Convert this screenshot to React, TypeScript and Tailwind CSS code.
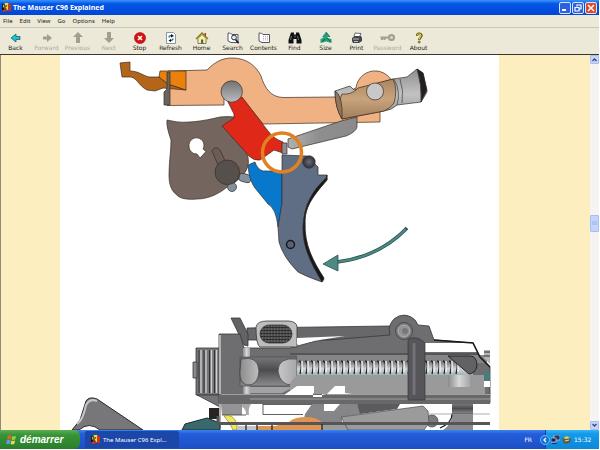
import React from "react";

const menus = ["File", "Edit", "View", "Go", "Options", "Help"];

function Flag() {
  return (
    <svg className="size-[9px] shrink-0" viewBox="0 0 10 10" aria-hidden="true">
      <path d="M0 1h3v8H0z" fill="#171410" />
      <path d="M3 0h4v8H3z" fill="#f6dc2c" />
      <path d="M7 1h3v8H7z" fill="#d92b1c" />
      <path d="M4 2l2 1-2 2 2 3H3z" fill="#5b3a14" />
      <path d="M0 8l5-1 1 2-5 1z" fill="#c83a20" />
      <path d="M1 2h1v3H1z" fill="#d8d8c8" />
    </svg>
  );
}

const arrow = "M1 6l5-4v2.500h4v3H6V10z";

const tools: { label: string; off?: boolean; icon: React.ReactNode }[] = [
  { label: "Back", icon: <path d={arrow} fill="#19c3cf" stroke="#15535c" strokeWidth=".7" /> },
  { label: "Forward", off: true, icon: <path d={arrow} transform="rotate(180 6 6)" fill="#a19f92" /> },
  { label: "Previous", off: true, icon: <path d="M6 0l5 5H8v6H4V5H1z" fill="#a19f92" /> },
  { label: "Next", off: true, icon: <path d="M6 11l5-5H8V0H4v6H1z" fill="#a19f92" /> },
  {
    label: "Stop",
    icon: (
      <>
        <circle cx="6" cy="6" r="5.600" fill="#d90d12" stroke="#8b0d0d" strokeWidth=".5" />
        <path d="M4 4l4 4M8 4L4 8" stroke="#fff" strokeWidth="1.600" />
      </>
    ),
  },
  {
    label: "Refresh",
    icon: (
      <>
        <path d="M1.500.5h7l2 2v9h-9z" fill="#fff" stroke="#6f7f95" strokeWidth=".8" />
        <path d="M4 5.500c0-2 2-2 3-1.500M8 6.500c0 2-2 2-3 1.500" fill="none" stroke="#146070" strokeWidth="1.300" />
        <path d="M6 2l3 2-3 1.500zM6 7L3.500 8.500 6 10z" fill="#111" />
      </>
    ),
  },
  {
    label: "Home",
    icon: (
      <>
        <path d="M8.500 1h1.500v3H8.500z" fill="#b82424" />
        <path d="M2 6.500L6 2.500l4 4v5H2z" fill="#f7f3a2" stroke="#55522a" strokeWidth=".7" />
        <path d="M0 7l6-6 6 6" fill="none" stroke="#827d16" strokeWidth="1.400" />
        <path d="M5 7.500h2.200v4H5z" fill="#4d5d69" />
      </>
    ),
  },
  {
    label: "Search",
    icon: (
      <>
        <path d="M1 1c2 0 3 .5 4 1.500h6v8H4L1 9z" fill="#fff" stroke="#5b5266" strokeWidth="1" />
        <circle cx="7" cy="5.500" r="2.400" fill="#d9f2f4" stroke="#2e2e35" />
        <path d="M8.600 7.500l3 3.700" stroke="#16161a" strokeWidth="1.600" />
      </>
    ),
  },
  {
    label: "Contents",
    icon: (
      <>
        <path d="M1 1c2 0 3 .5 4 1.500h6.500v8H4L1 9z" fill="#fff" stroke="#5b5266" strokeWidth="1" />
        <path d="M5 4.500h5M5 6.300h5M5 8h5" stroke="#8d8c9a" strokeWidth=".7" strokeDasharray="1 1" />
      </>
    ),
  },
  {
    label: "Find",
    icon: (
      <>
        <path d="M2 .5h3v2h2v-2h3l2.500 7.500v3.500H7.500V7h-3v4.500H-.5V8z" fill="#101212" />
        <path d="M2.500 4L1.500 8M8.500 4l1 4M6 3.500v2" stroke="#8a9494" strokeWidth=".7" />
      </>
    ),
  },
  {
    label: "Size",
    icon: (
      <>
        <path d="M6 0l4 5H7.500v1L11.500 7v4L6 9.500.5 11V7L4 5.500 2 5z" fill="#24a464" />
        <path d="M6 1L3 5h3zM1 7.500l3-1v3zM8 7l3 1.500-3 1z" fill="#2a8fc6" />
        <path d="M6 0l4 5M2 10l3-3M7 6l4 4" stroke="#0d5048" strokeWidth=".8" />
      </>
    ),
  },
  {
    label: "Print",
    icon: (
      <>
        <path d="M4 1l6 .5L8.500 5 3 4.500z" fill="#fff" stroke="#33333b" strokeWidth=".7" />
        <path d="M1 6l3-2h6l1 2v3L8 11H2L1 9z" fill="#44444c" />
        <path d="M2 7h6M3 9.500h4" stroke="#dcdce2" strokeWidth=".8" />
      </>
    ),
  },
  {
    label: "Password",
    off: true,
    icon: (
      <>
        <circle cx="9.500" cy="5.500" r="2.600" fill="#d8d5c6" stroke="#a19f92" strokeWidth="2" />
        <path d="M-1.500 5.500h8M0 6v2M2.500 6v2" stroke="#a19f92" strokeWidth="2" />
      </>
    ),
  },
  {
    label: "About",
    icon: (
      <>
        <path d="M4 4c0-3 4.500-3 4.500-.5C8.500 5.500 6.200 5.200 6.200 8" fill="none" stroke="#4a4515" strokeWidth="2.300" />
        <path d="M4 3.700c0-2.500 4-2.500 4-.2C8 5.300 6.200 5 6.200 7.500" fill="none" stroke="#f0dd32" strokeWidth="1.100" />
        <circle cx="6.200" cy="10" r="1.100" fill="#bba91c" stroke="#4a4515" strokeWidth=".6" />
      </>
    ),
  },
];

const coils = Array.from({ length: 27 }, (_, i) => 299 + i * 6);

function Diagram() {
  return (
    <svg className="block h-[375px] w-full" viewBox="60 55 439 375" preserveAspectRatio="xMidYMin slice" role="img" aria-label="Mauser C96 trigger mechanism">
      <defs>
        <linearGradient id="steel" x1="0" y1="0" x2="0" y2="1">
          <stop offset="0" stopColor="#727274" />
          <stop offset="1" stopColor="#bcbcbe" />
        </linearGradient>
        <linearGradient id="lever" x1="0" y1="0" x2="1" y2="0">
          <stop offset="0" stopColor="#b0b0b0" />
          <stop offset=".45" stopColor="#8e8e8e" />
          <stop offset="1" stopColor="#8a8a8a" />
        </linearGradient>
        <linearGradient id="grip" x1="0" y1="0" x2="0" y2="1">
          <stop offset="0" stopColor="#8e8e8e" />
          <stop offset=".5" stopColor="#c2c2c2" />
          <stop offset="1" stopColor="#939393" />
        </linearGradient>
        <linearGradient id="tan" x1="0" y1="0" x2="0" y2="1">
          <stop offset="0" stopColor="#a98560" />
          <stop offset=".5" stopColor="#c9a37c" />
          <stop offset="1" stopColor="#a17e5c" />
        </linearGradient>
        <linearGradient id="bolt" x1="0" y1="0" x2="0" y2="1">
          <stop offset="0" stopColor="#77777a" />
          <stop offset=".45" stopColor="#4c4c50" />
          <stop offset="1" stopColor="#8c8c8f" />
        </linearGradient>
        <linearGradient id="spring" x1="0" y1="0" x2="0" y2="1">
          <stop offset="0" stopColor="#6b6b6d" />
          <stop offset=".55" stopColor="#d4d4d4" />
          <stop offset="1" stopColor="#9fb4b8" />
        </linearGradient>
        <linearGradient id="shine" x1="0" y1="0" x2="1" y2="0">
          <stop offset="0" stopColor="#8b8b8d" />
          <stop offset=".5" stopColor="#d8d8d8" />
          <stop offset="1" stopColor="#a6a6a8" />
        </linearGradient>
        <radialGradient id="ball">
          <stop offset="0" stopColor="#6a6c78" />
          <stop offset="1" stopColor="#2d303b" />
        </radialGradient>
        <pattern id="knurl" width="3" height="3" patternUnits="userSpaceOnUse">
          <path d="M0 0h3v3H0z" fill="#a9a9a9" />
          <path d="M0 .6h3M.8 0v3M2.200 1v2" stroke="#1b1b1b" strokeWidth=".9" />
        </pattern>
      </defs>

      {/* firing group */}
      <g stroke="#3a2c22" strokeWidth=".7" strokeLinejoin="round">
        <path d="M168 71L207 70C215 62 222 58 232 58C247 58 256 66 261 76C265 89 271 97 283 97.500L335 97L356 88A19 19 0 0 1 394 92L380 112V122L263 124L242 98L224 98V105L167 105.500Z" fill="#f0b183" />
        <path d="M120 63L130 62L130 71C138 71 142 75 149 77L159 77L168 84L186 90L163 88L155 91L147 90C139 86 137 78 131 77L122 77Z" fill="#b3661a" />
        <path d="M160 71H186V90L168 84L159 77Z" fill="#eb810b" />
        <path d="M167 72h3v33h-6V92l3-3z" fill="#68645f" />
        <path d="M167 120L172 121C184 124 204 121 220 117Q228 116 234 117L248 157Q250 167 243 175Q237 182 227 187C219 194 208 199 197 199C186 200 180 198 178 196C171 191 169 184 169 175C169 162 171 152 171 140Q166 126 167 120Z" fill="#74665e" />
        <path d="M189 146a7.500 7.500 0 1 1 14 3l3 2.500-6 6.500-3-4a7.500 7.500 0 0 1-8-8z" fill="#fff" />
        <path d="M212 151q3-6 8-1l6 13-7 4z" fill="#6b5e57" />
        <rect x="239" y="174" width="12" height="8" rx="3" transform="rotate(15 245 178)" fill="#80929f" />
        <circle cx="232" cy="187" r="4.500" fill="#80929f" />
        <circle cx="227.300" cy="172.300" r="12.300" fill="#56504c" />
        <path d="M227 100L242 97L268 131Q274 139 283 142V153L274 150L260 160Q254 161 249 156L222 126L234 118V114Z" fill="#df2818" />
        <circle cx="231.700" cy="91.500" r="10.700" fill="url(#steel)" />
        <path d="M248 165L255 162Q257 169 263 171L282 171V203L278 227Q276 208 268 204L255 188Q249 180 248 165Z" fill="#0878cd" />
        <path d="M282 155L307 156L318 167V175L327 175V180C311 198 305 208 305 222C304 245 313 261 324 279L322 282Q307 277 298 272Q283 257 279 242L278 227L282 203Z" fill="#5f6d85" />
        <path d="M327 175V180C311 198 305 208 305 222C304 245 313 261 324 278L322 282C310 262 302 245 303 226C304 205 312 191 326 178Z" fill="#16171b" />
        <circle cx="309" cy="162" r="6.200" fill="url(#ball)" />
        <circle cx="290.500" cy="244.500" r="4" fill="#596172" stroke="#17191f" strokeWidth="1.500" />
        <path d="M288 139L341 121L357 117V127Q356 132 346 136L292 149L288 147Z" fill="url(#lever)" />
        <path d="M282 143h5v11h-5z" fill="#8d8d92" />
        <path d="M335 91L350 86L354 90L393 79L407 77L417 69L423 73L427 92L421 102L397 105Q392 110 384 111L342 119Q335 107 335 91Z" fill="url(#grip)" />
        <path d="M342 94Q352 95 358 88L393 79Q398 89 394 103Q390 109 384 111L342 119Q336 106 342 94Z" fill="url(#tan)" />
        <path d="M394 79q7 12 3 26M400 79q4 11 2 24" fill="none" stroke="#3c3c3c" />
        <path d="M417 69l6 4 4 17-6 12q1-17-4-33z" fill="#202022" />
        <path d="M335 91Q343 95 342 119Q335 108 335 91Z" fill="#92765b" />
        <circle cx="375" cy="91.500" r="8.500" fill="#c8c8c8" />
      </g>
      <circle cx="282" cy="152.500" r="19.500" fill="none" stroke="#df821f" strokeWidth="3.500" />
      <path d="M337 262Q379 257 407 228" fill="none" stroke="#26504d" strokeWidth="3.600" />
      <path d="M337 262Q379 257 406 229" fill="none" stroke="#4e8a83" strokeWidth="2" />
      <path d="M323 264L338 255V271Z" fill="#4e8a83" stroke="#26504d" strokeWidth=".8" />

      {/* receiver */}
      <g stroke="#37373a" strokeWidth=".8">
        <path d="M247 328L390 326L410 334V340H247Z" fill="#68686b" />
        <path d="M231 318L240 318L248 334V346L244 345Z" fill="#636366" />
        <path d="M196 348H220V395H196Z" fill="#77777a" />
        <path d="M193 362h4v16h-4z" fill="#88888a" />
        <path d="M197 395H220V407Z" fill="#747477" />
        <path d="M219 334H240L244 348H290L316 341L390 335A14.500 14.500 0 0 1 418 325L429 326L434 340L473 343L478 354L490 367V403H219Z" fill="#6e6e71" />
        <path d="M256 327q1-6 11-6h22q8 1 8 6v20h-37q-4-2-4-20z" fill="#bdbdbd" />
        <rect x="260" y="325" width="32" height="18" rx="9" fill="url(#knurl)" />
      </g>
      <path d="M297 338L345 336L313 341L297 344Z" fill="#fff" />
      <path d="M199 350v43M204 350v43M209.500 350v43M214.500 350v43" stroke="#303034" strokeWidth="1" />
      <path d="M201 350v43M206 350v43M211.500 350v43M216.500 350v43" stroke="#d1d1d1" strokeWidth="1.300" />
      <path d="M220 335v93" stroke="#b1b1b1" strokeWidth="2" />
      <path d="M243 348h7v52h-7z" fill="url(#shine)" />
      <path d="M240 357h57v29h-57z" fill="url(#bolt)" stroke="#444448" strokeWidth=".6" />
      <path d="M241 359q17-4 18 12q-1 15-12 14q-8-2-7-14zM297 359q-19-2-19 12q2 14 14 14l5-3z" fill="url(#shine)" stroke="#3b3b3d" strokeWidth=".7" />
      <path d="M250 387h44l-12 6h-32z" fill="#a3a3a5" />
      <path d="M290 354h188" stroke="#3d3d40" strokeWidth="1" />
      <path d="M297 355h190v8H297z" fill="#858587" />
      <path d="M297 361h176v14H297z" fill="url(#spring)" />
      <g fill="none">
        {coils.map((x) => (
          <g key={x}>
            <path d={`M${x} 361q4 0 1 13`} stroke="#262629" strokeWidth="1.300" />
            <path d={`M${x + 3} 361v11`} stroke="#f0f4f4" strokeWidth="1.500" />
          </g>
        ))}
      </g>
      <path d="M297 375H485V394H290V383Z" fill="#9a9a9b" />
      <path d="M219 394H490V404H219Z" fill="#68686b" />
      <path d="M284 395L297 386H314V393H313V397H322V394H327L335 386H345V393L352 394H327L322 395ZM425 343H473L478 352H425Z" fill="#fff" />
      <path d="M221 394.500H284M327 394.500H408M424 394.500H490M250 399H490" stroke="#a6a6a6" strokeWidth=".9" />
      <path d="M448 356H470Q477 356 477 366Q475 374 469 374Z" fill="#626265" stroke="#252528" />
      <path d="M448 375h22v12h-22z" fill="url(#shine)" />
      <path d="M408 339Q417 335 425 343V400H408Z" fill="#55555a" stroke="#36363a" strokeWidth=".7" />
      <path d="M414 343v52" stroke="#717176" strokeWidth="3" />
      <circle cx="404" cy="331" r="8.500" fill="#77777a" stroke="#4b4b4e" />
      <circle cx="404" cy="331" r="6" fill="#939396" stroke="#aeaeb0" />
      <circle cx="405" cy="331" r="3" fill="#77777a" />
      <path d="M434 340L473 343L480 357L490 367" fill="none" stroke="#18181a" strokeWidth="1.600" />
      <path d="M484 350h6v14l-6-6z" fill="#b5b5b5" />
      <path d="M484 352h6M484 356h6" stroke="#333" strokeWidth="1.200" />
      <path d="M484 371h6v10h-6z" fill="#477b7c" />
      <path d="M484 381h6v6h-6z" fill="#fff" />

      {/* frame below the receiver */}
      <path d="M182 430L185 424L207 418L220 423V430Z" fill="#39696a" stroke="#182c2d" />
      <path d="M209 408h10v11h-10z" fill="#292421" />
      <path d="M221 404H242V415H222Z" fill="#949496" />
      <path d="M242 404H251Q248 408 249 415H246Q246 408 242 407Z" fill="#a9a9ab" />
      <path d="M263 404V414.500H303M222 415H246M263 404.500H312" fill="none" stroke="#37373a" strokeWidth=".8" />
      <path d="M236 416H303L302 423H236Z" fill="#fff" />
      <path d="M312 404H324V411H334L340 404H357L361 414L342 417V423H303L305 414Z" fill="#868688" />
      <path d="M289 422Q294 417 306 417Q317 417 323 423V430H257V426H275Z" fill="#df9551" />
      <path d="M224 416Q233 413 237 424V430H233L230 424Z" fill="#eee65b" stroke="#777126" strokeWidth=".6" />
      <path d="M322 423H350V430H322Z" fill="#9b9b9c" />
      <path d="M357 404H400L397 409L360 414Z" fill="#5b5b5e" />
      <circle cx="432" cy="421" r="6" fill="#7c7c7e" stroke="#39393b" strokeWidth=".7" />
      <path d="M341 417L423 406L428 411L429 423L424 430H348Z" fill="#9b9b9c" stroke="#4b4b4d" strokeWidth=".7" />
      <path d="M452 404H473V414H452Z" fill="url(#bolt)" />
      <path d="M452 415H473V430H443Q452 424 452 415Z" fill="#8b8b8d" />
      <path d="M473 414H452Q452 423 440 428" fill="none" stroke="#19191b" strokeWidth="1.200" />
      <path d="M429 414H490" stroke="#98989a" strokeWidth=".8" />
      <path d="M218 416v7.500H490" fill="none" stroke="#55555a" strokeWidth="3" />
      <path d="M237 426h20v4h-20z" fill="#c4c4c6" />
      <path d="M246 425v5M257 425v5M272 425v5M322 424v6" stroke="#252528" strokeWidth="1.300" />

      {/* hammer tip at the lower left */}
      <path d="M72 430L80 420L86 401Q89 396 97 399L143 430H100Q89 421 79 430Z" fill="#777779" stroke="#27272a" strokeWidth="1" />
      <path d="M77 424Q83 420 86 405Q90 398 97 401" fill="none" stroke="#c6c6c8" strokeWidth="2" />
    </svg>
  );
}

const captionButton =
  "flex size-[12px] items-center justify-center rounded-xs border border-[#d9e5ff] text-white";

const scrollPart =
  "flex w-full shrink-0 items-center justify-center rounded-[1px] border border-[#a9bdf0] bg-[#c4d4fc] text-[#34486f]";

export default function App() {
  return (
    <div className="flex h-screen flex-col overflow-hidden bg-white pr-px pb-px font-['DejaVu_Sans',sans-serif] text-[6px] leading-[8px] text-[#222]">
      <header className="flex h-[15px] shrink-0 items-center gap-[2px] bg-linear-to-b from-[#3b93fa] via-[#0556e6] via-25% to-[#0346d5] px-[2px]">
        <Flag />
        <h1 className="grow font-['Noto_Sans',sans-serif] text-[7px] leading-[12px] font-bold text-white">The Mauser C96 Explained</h1>
        <div className="flex gap-px">
          <button aria-label="Minimize" className={`${captionButton} bg-[#2b63df]`}>
            <svg className="size-[8px]" viewBox="0 0 8 8"><path d="M1 6h4" stroke="currentColor" strokeWidth="2" /></svg>
          </button>
          <button aria-label="Restore" className={`${captionButton} bg-[#2b63df]`}>
            <svg className="size-[8px]" viewBox="0 0 8 8" fill="none" stroke="currentColor"><path d="M3 2.500V1h4v4H5.500M1 3.500h4V7H1z" strokeWidth="1.200" /></svg>
          </button>
          <button aria-label="Close" className={`${captionButton} bg-[#dd4a25]`}>
            <svg className="size-[8px]" viewBox="0 0 8 8"><path d="M1 1l6 6M7 1L1 7" stroke="currentColor" strokeWidth="1.500" /></svg>
          </button>
        </div>
      </header>

      <nav className="flex h-[12px] shrink-0 items-center gap-[7px] bg-[#ece9d8] px-[3px] font-['Noto_Sans',sans-serif]">
        {menus.map((m) => (
          <button key={m}>{m}</button>
        ))}
      </nav>

      <div className="flex h-[28px] shrink-0 border-t border-b border-t-[#cbc7b7] border-b-[#3b352a] bg-[#ece9d8]">
        {tools.map((t) => (
          <button
            key={t.label}
            disabled={t.off}
            className="flex w-[31px] shrink-0 flex-col items-center pt-[4px] disabled:text-[#aca899]"
          >
            <svg className="size-[12px] shrink-0 overflow-visible" viewBox="0 0 12 12" aria-hidden="true">{t.icon}</svg>
            <span>{t.label}</span>
          </button>
        ))}
      </div>

      <div className="flex min-h-0 grow border-l border-[#8d897b]">
        <main className="min-w-0 grow overflow-hidden bg-[#fceebf] pr-[91px] pl-[59px]">
          <div className="h-full bg-white">
            <Diagram />
          </div>
        </main>
        <div className="flex w-[9px] shrink-0 flex-col bg-[#f5f4f0]">
          <button aria-label="Scroll up" className={`${scrollPart} h-[9px]`}>
            <svg className="size-[5px]" viewBox="0 0 5 5"><path d="M.5 4l2-2 2 2" fill="none" stroke="currentColor" strokeWidth="1.300" /></svg>
          </button>
          <div className="grow-[4]" />
          <div className={`${scrollPart} h-[17px]`}>
            <svg className="size-[5px]" viewBox="0 0 5 5"><path d="M0 1h5M0 3h5" stroke="#8ea7e4" strokeWidth=".8" /></svg>
          </div>
          <div className="grow-[5]" />
          <button aria-label="Scroll down" className={`${scrollPart} h-[9px]`}>
            <svg className="size-[5px]" viewBox="0 0 5 5"><path d="M.5 1l2 2 2-2" fill="none" stroke="currentColor" strokeWidth="1.300" /></svg>
          </button>
        </div>
      </div>

      <footer className="flex h-[19px] shrink-0 items-stretch bg-linear-to-b from-[#3d83f2] via-[#245edb] via-20% to-[#1d4fc4] text-white">
        <button className="flex w-[80px] items-center gap-[3px] rounded-r-md bg-linear-to-b from-[#5eac56] via-[#379537] via-25% to-[#2b7d2d] pl-[6px]">
          <svg className="size-[11px] shrink-0" viewBox="0 0 12 12" aria-hidden="true">
            <path d="M2 2q2-1.500 4 0L5 6Q3 5 1 6z" fill="#f0592a" />
            <path d="M7 2.300q2 1 4 0L10 6Q8 7 6 6z" fill="#8fd34a" />
            <path d="M1 7q2-1.500 4 0L4 11Q2 10 0 11z" fill="#5c9df5" />
            <path d="M6 7.200q2 1 4 0L9 11Q7 12 5 11z" fill="#fbd34a" />
          </svg>
          <span className="font-['Liberation_Sans',sans-serif] text-[10px] leading-[14px] font-bold italic">démarrer</span>
        </button>
        <button className="my-px ml-[5px] flex w-[94px] items-center gap-[3px] rounded-xs bg-[#1b47a8] pl-[6px] font-['Noto_Sans',sans-serif]">
          <Flag />
          <span>The Mauser C96 Expl...</span>
        </button>
        <div className="grow" />
        <span className="self-center pr-[13px]">FR</span>
        <div className="relative flex w-[54px] items-center gap-[2px] border-l border-[#0e3fa8] bg-linear-to-b from-[#35b5f4] via-[#129be9] via-20% to-[#0f87d8] pl-[5px]">
          <button aria-label="Show hidden icons" className="absolute top-[5px] -left-[6px] flex size-[10px] items-center justify-center rounded-full border border-[#6cb9f5] bg-[#1470d9]">
            <svg className="size-[6px]" viewBox="0 0 6 6"><path d="M4 1L2 3l2 2" fill="none" stroke="#fff" strokeWidth="1.300" /></svg>
          </button>
          <svg className="size-[9px] shrink-0" viewBox="0 0 9 9" aria-hidden="true">
            <path d="M3 0h6v5H3z" fill="#20366f" stroke="#c5d2e8" strokeWidth=".7" />
            <path d="M0 3h5v4H0z" fill="#1c2450" stroke="#c5d2e8" strokeWidth=".7" />
            <path d="M1 8.500h5" stroke="#24305a" />
          </svg>
          <svg className="size-[9px] shrink-0" viewBox="0 0 9 9" aria-hidden="true">
            <path d="M0 3l5-2 4 3-1 4-6 1z" fill="#575e4a" />
            <path d="M1 3l4-2 3 2-4 1z" fill="#e4d24a" />
            <path d="M3 6l4-1" stroke="#d8e0ce" />
          </svg>
          <span className="pl-px">15:32</span>
        </div>
      </footer>
    </div>
  );
}
